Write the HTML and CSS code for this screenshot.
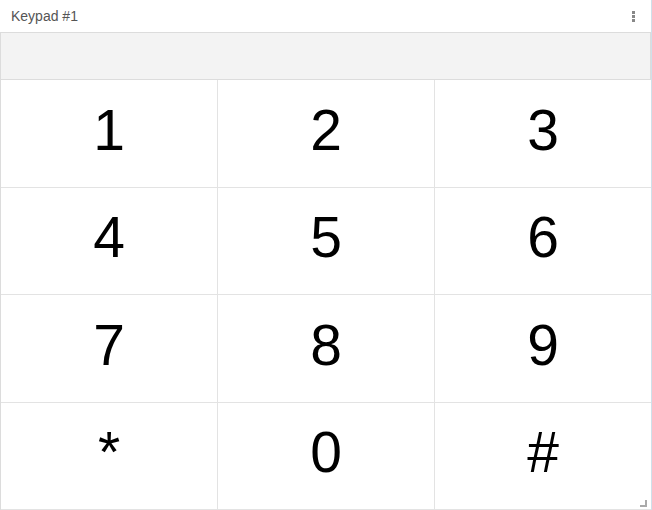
FILE: index.html
```html
<!DOCTYPE html>
<html>
<head>
<meta charset="utf-8">
<link rel="stylesheet" href="styles.css">
</head>
<body>
<div class="widget">
  <div class="header">
    <span class="title">Keypad #1</span>
    <span class="kebab"><i></i><i></i><i></i></span>
  </div>
  <div class="display"></div>
  <div class="keys">
    <div class="key">1</div><div class="key">2</div><div class="key">3</div>
    <div class="key">4</div><div class="key">5</div><div class="key">6</div>
    <div class="key">7</div><div class="key">8</div><div class="key">9</div>
    <div class="key">*</div><div class="key">0</div><div class="key">#</div>
  </div>
  <span class="resize"></span>
</div>
</body>
</html>
```
FILE: styles.css
```css
html, body {
  margin: 0;
  padding: 0;
  background: #fff;
  overflow: hidden;
}
.widget {
  position: relative;
  width: 651px;
  height: 510px;
  border-right: 1px solid #cfe0ea;
  font-family: "Liberation Sans", Arial, sans-serif;
  display: flex;
  flex-direction: column;
}
.header {
  height: 32px;
  display: flex;
  align-items: center;
  justify-content: space-between;
  padding: 0 16px 0 11px;
}
.title {
  font-size: 14px;
  color: #555;
}
.kebab {
  display: flex;
  flex-direction: column;
  gap: 1px;
}
.kebab i {
  width: 3px;
  height: 3px;
  background: #888;
}
.display {
  height: 46px;
  background: #f3f3f3;
  border: 1px solid #dcdcdc;
}
.keys {
  flex: 1;
  display: grid;
  grid-template-columns: 217px 217px 1fr;
  grid-template-rows: repeat(4, 107.5px);
  border-left: 1px solid #dcdcdc;
}
.key {
  display: flex;
  align-items: center;
  justify-content: center;
  font-size: 57px;
  line-height: 1;
  padding-bottom: 6px;
  color: #000;
  border-right: 1px solid #e3e3e3;
  border-bottom: 1px solid #e3e3e3;
}
.key:nth-child(3n) {
  border-right: none;
}
.resize {
  position: absolute;
  right: 4px;
  bottom: 3px;
  width: 5px;
  height: 5px;
  border-right: 2px solid #aaa;
  border-bottom: 2px solid #aaa;
}
```
